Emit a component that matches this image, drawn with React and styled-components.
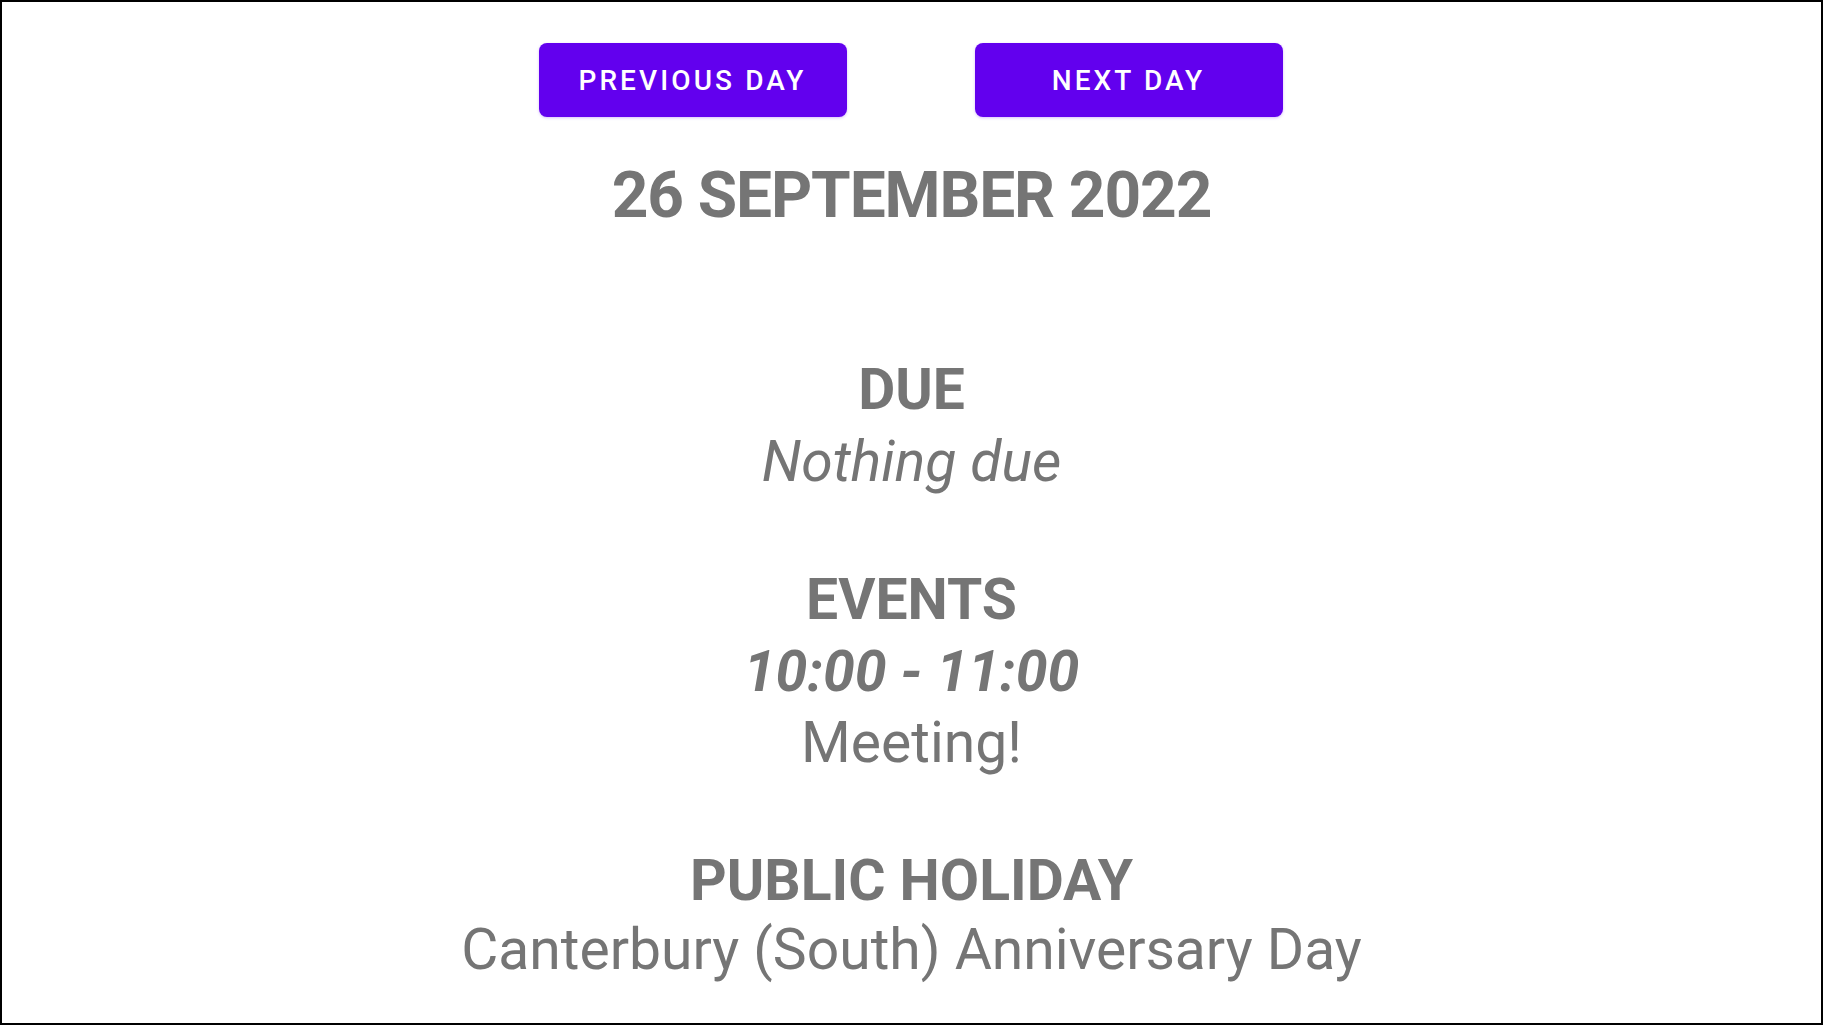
import React from "react";
import styled, { createGlobalStyle } from "styled-components";

const GlobalStyle = createGlobalStyle`
    html, body {
        margin: 0;
        padding: 0;
        background: #ffffff;
    }
    body {
        font-family: Roboto, "Noto Sans", Arial, sans-serif;
    }
`;

const Page = styled.div`
    box-sizing: border-box;
    width: 1823px;
    height: 1025px;
    border: 2px solid #000000;
    display: flex;
    flex-direction: column;
    align-items: center;
    padding-top: 41px;
    color: #757575;
    text-align: center;
    overflow: hidden;
`;

const ButtonRow = styled.div`
    display: flex;
    gap: 128px;
    margin-left: -2px;
`;

const DayButton = styled.button`
    width: 308px;
    height: 74px;
    border: none;
    border-radius: 8px;
    background: #6200ee;
    color: #ffffff;
    font-family: Roboto, sans-serif;
    font-weight: 500;
    font-size: 28px;
    letter-spacing: 3.1px;
    text-transform: uppercase;
    box-shadow: 0 1px 3px rgba(98, 0, 238, 0.25);
    cursor: pointer;
`;

const DateTitle = styled.h1`
    margin: 40px 0 120px;
    font-size: 64px;
    font-weight: 700;
    letter-spacing: -1.1px;
    line-height: 77px;
`;

const Sections = styled.div`
    display: flex;
    flex-direction: column;
    align-items: center;
    gap: 66px;
`;

const Section = styled.div`
    display: flex;
    flex-direction: column;
    align-items: center;
    margin-top: ${(p) => p.$pull || 0}px;
`;

const Line = styled.div`
    font-size: 57px;
    line-height: ${(p) => p.$lh || 72}px;
    font-weight: ${(p) => (p.$bold ? 700 : 400)};
    font-style: ${(p) => (p.$italic ? "italic" : "normal")};
    white-space: nowrap;
`;

const App = () => {
    return (
        <>
            <GlobalStyle />
            <Page>
                <ButtonRow>
                    <DayButton>Previous Day</DayButton>
                    <DayButton>Next Day</DayButton>
                </ButtonRow>
                <DateTitle>26 SEPTEMBER 2022</DateTitle>
                <Sections>
                    <Section>
                        <Line $bold>DUE</Line>
                        <Line $italic>Nothing due</Line>
                    </Section>
                    <Section>
                        <Line $bold>EVENTS</Line>
                        <Line $bold $italic>10:00 - 11:00</Line>
                        <Line $lh={69}>Meeting!</Line>
                    </Section>
                    <Section $pull={3}>
                        <Line $bold $lh={69}>PUBLIC HOLIDAY</Line>
                        <Line $lh={69}>Canterbury (South) Anniversary Day</Line>
                    </Section>
                </Sections>
            </Page>
        </>
    );
};

export default App;
